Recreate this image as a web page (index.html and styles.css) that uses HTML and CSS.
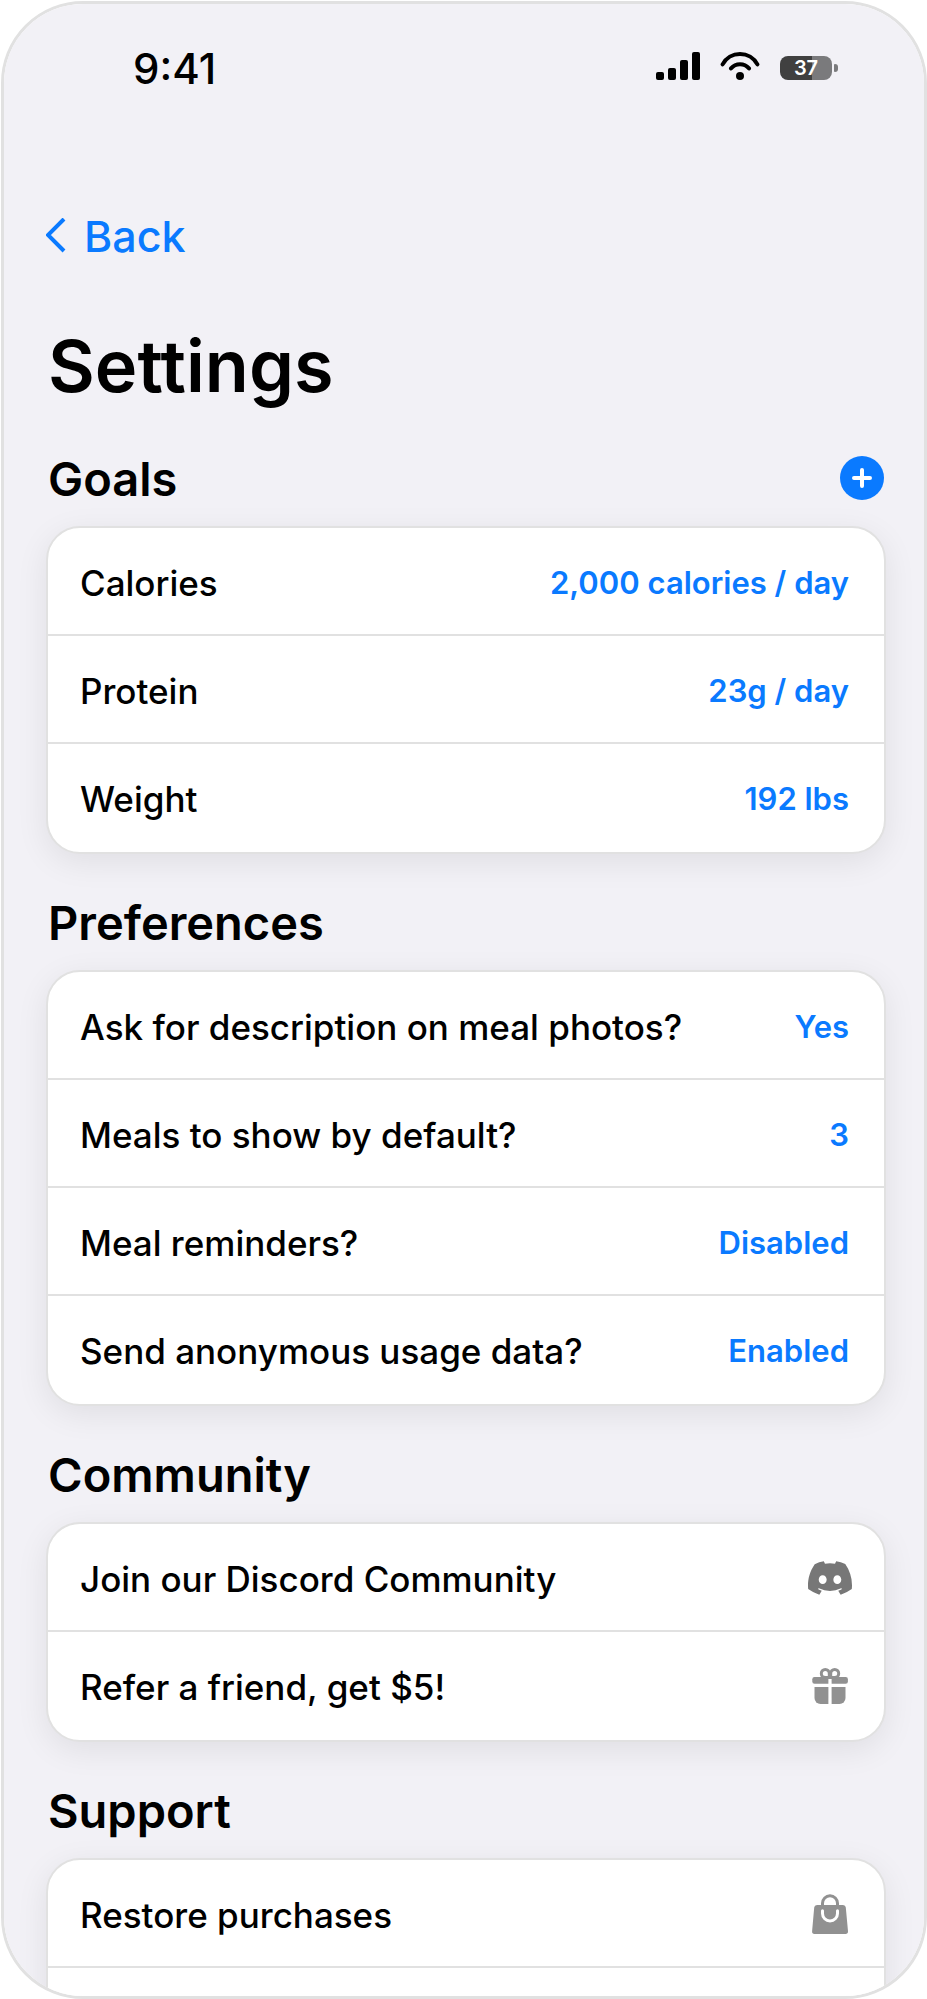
FILE: index.html
```html
<!DOCTYPE html>
<html lang="en">
<head>
  <meta charset="utf-8">
  <meta name="viewport" content="width=device-width, initial-scale=1">
  <title>Settings</title>
  <link rel="stylesheet" href="styles.css">
</head>
<body>
  <div class="phone">
    <header class="status-bar">
      <time class="clock">9:41</time>
      <div class="status-icons">
        <svg class="signal" viewBox="0 0 44 28" aria-hidden="true">
          <rect x="0" y="20" width="8" height="8" rx="2"/>
          <rect x="12" y="16" width="8" height="12" rx="2"/>
          <rect x="24" y="8" width="8" height="20" rx="2"/>
          <rect x="36" y="0" width="8" height="28" rx="2"/>
        </svg>
        <svg class="wifi" viewBox="0 0 40 28" aria-hidden="true">
          <path d="M2.6 12.4A19.8 19.8 0 0 1 37.4 12.4M11 16.4A12 12 0 0 1 29 16.4" fill="none" stroke="currentColor" stroke-width="4" stroke-linecap="round"/>
          <circle cx="20" cy="24" r="4"/>
        </svg>
        <div class="battery">
          <span class="battery-level">37</span>
          <span class="battery-tip"></span>
        </div>
      </div>
    </header>

    <main class="screen">
      <a class="back" href="#">
        <svg class="chevron" viewBox="0 0 20 36" aria-hidden="true">
          <path d="M18 1L2 17L18 33" fill="none" stroke="currentColor" stroke-width="4"/>
        </svg>
        Back
      </a>
      <h1 class="title">Settings</h1>

      <section class="section">
        <div class="section-head">
          <h2 class="section-title">Goals</h2>
          <button class="add" type="button" aria-label="Add goal">
            <svg class="plus" viewBox="0 0 20 20" aria-hidden="true">
              <path d="M10 2V18M2 10H18" fill="none" stroke="currentColor" stroke-width="4" stroke-linecap="round"/>
            </svg>
          </button>
        </div>
        <ul class="card">
          <li class="row"><span id="calories">Calories</span><button class="value" type="button" aria-describedby="calories">2,000 calories / day</button></li>
          <li class="row"><span id="protein">Protein</span><button class="value" type="button" aria-describedby="protein">23g / day</button></li>
          <li class="row"><span id="weight">Weight</span><button class="value" type="button" aria-describedby="weight">192 lbs</button></li>
        </ul>
      </section>

      <section class="section">
        <div class="section-head"><h2 class="section-title">Preferences</h2></div>
        <ul class="card">
          <li class="row"><span id="ask">Ask for description on meal photos?</span><button class="value" type="button" aria-describedby="ask">Yes</button></li>
          <li class="row"><span id="meals">Meals to show by default?</span><button class="value" type="button" aria-describedby="meals">3</button></li>
          <li class="row"><span id="reminders">Meal reminders?</span><button class="value" type="button" aria-describedby="reminders">Disabled</button></li>
          <li class="row"><span id="usage">Send anonymous usage data?</span><button class="value" type="button" aria-describedby="usage">Enabled</button></li>
        </ul>
      </section>

      <section class="section">
        <div class="section-head"><h2 class="section-title">Community</h2></div>
        <ul class="card">
          <li class="row">
            <a class="row-link" href="#">Join our Discord Community
              <svg class="icon icon-dark" viewBox="0 0 127.14 96.36" aria-hidden="true">
                <path fill="currentColor" d="M107.7,8.07A105.15,105.15,0,0,0,81.47,0a72.06,72.06,0,0,0-3.36,6.83A97.68,97.68,0,0,0,49,6.83,72.37,72.37,0,0,0,45.64,0,105.89,105.89,0,0,0,19.39,8.09C2.79,32.65-1.71,56.6.54,80.21h0A105.73,105.73,0,0,0,32.71,96.36,77.7,77.7,0,0,0,39.6,85.25a68.42,68.42,0,0,1-10.85-5.18c.91-.66,1.8-1.34,2.66-2a75.57,75.57,0,0,0,64.32,0c.87.71,1.76,1.39,2.66,2a68.68,68.68,0,0,1-10.87,5.19,77,77,0,0,0,6.89,11.1A105.25,105.25,0,0,0,126.6,80.22h0C129.24,52.84,122.09,29.11,107.7,8.07ZM42.45,65.69C36.18,65.69,31,60,31,53s5-12.74,11.43-12.74S54,46,53.89,53,48.84,65.69,42.45,65.69Zm42.24,0C78.41,65.69,73.25,60,73.25,53s5-12.74,11.44-12.74S96.23,46,96.12,53,91.08,65.69,84.69,65.69Z"/>
              </svg>
            </a>
          </li>
          <li class="row">
            <a class="row-link" href="#">Refer a friend, get $5!
              <svg class="icon" viewBox="0 0 44 40" aria-hidden="true">
                <g fill="currentColor">
                  <path d="M6.5 11H20.4V17.7H6.5A2.2 2.2 0 0 1 4.3 15.5V13.2A2.2 2.2 0 0 1 6.5 11Z"/>
                  <path d="M23.6 11H37.7A2.2 2.2 0 0 1 39.9 13.2V15.5A2.2 2.2 0 0 1 37.7 17.7H23.6Z"/>
                  <path d="M6.5 21H20.4V38H12.5A6 6 0 0 1 6.5 32Z"/>
                  <path d="M23.6 21H37.5V32A6 6 0 0 1 31.5 38H23.6Z"/>
                </g>
                <g fill="none" stroke="currentColor" stroke-width="3">
                  <path d="M21.3 11.500H17.3A4 4 0 1 1 21.3 7.500Z"/>
                  <path d="M22.7 11.500H26.7A4 4 0 1 0 22.7 7.500Z"/>
                </g>
              </svg>
            </a>
          </li>
        </ul>
      </section>

      <section class="section">
        <div class="section-head"><h2 class="section-title">Support</h2></div>
        <ul class="card">
          <li class="row">
            <a class="row-link" href="#">Restore purchases
              <svg class="icon" viewBox="0 0 44 40" aria-hidden="true">
                <path fill="currentColor" d="M9 11H35Q37.6 11 37.8 13.5L40 37.3Q40.1 40 37.5 40H6.5Q3.9 40 4.1 37.3L6.2 13.5Q6.4 11 9 11Z"/>
                <path d="M14.5 12V9.3A7.5 7.5 0 0 1 29.5 9.3V12" fill="none" stroke="currentColor" stroke-width="3"/>
                <path d="M14.5 16.7V19.5A7.5 7.5 0 0 0 29.5 19.5V16.7" fill="none" stroke="#fff" stroke-width="3" stroke-linecap="round"/>
              </svg>
            </a>
          </li>
          <li class="row"></li>
        </ul>
      </section>
    </main>
  </div>
</body>
</html>
```

FILE: styles.css
```css
:root {
  --blue: #0a7aff;
  --line: #e1e1e1;
  --page: #f2f1f6;
}

* {
  box-sizing: border-box;
}

body {
  margin: 0;
  padding: 1px 0 0 1px;
  background: #fff;
  color: #000;
  font-family: Inter, "Liberation Sans", sans-serif;
}

.phone {
  height: calc(100vh - 1px);
  overflow: auto;
  scrollbar-width: none;
  border: 3px solid var(--line);
  border-radius: 82px;
  background: var(--page);
}

.status-bar {
  display: flex;
  align-items: center;
  justify-content: space-between;
  padding: 41px 86px 0 129px;
}

.clock {
  font-size: 42px;
  font-weight: 500;
  line-height: 48px;
}

.status-icons {
  display: flex;
  align-items: flex-end;
  gap: 20px;
  padding-bottom: 6px;
}

.signal {
  width: 44px;
  height: 28px;
}

.wifi {
  width: 40px;
  height: 28px;
}

.battery {
  display: flex;
  align-items: center;
  gap: 2px;
}

.battery-level {
  width: 52px;
  border-radius: 8px;
  background: linear-gradient(to right, #404040 62%, #7a7a7c 62%);
  color: #fff;
  font-size: 20px;
  font-weight: 600;
  line-height: 24px;
  text-align: center;
}

.battery-tip {
  width: 4px;
  height: 8px;
  border-radius: 1px 3px 3px 1px;
  background: #7a7a7c;
}

.screen {
  padding: 116px 38px 40px 42px;
}

.back {
  display: flex;
  align-items: center;
  gap: 18px;
  width: fit-content;
  color: var(--blue);
  font-size: 43px;
  font-weight: 500;
  line-height: 54px;
  text-decoration: none;
}

.chevron {
  width: 20px;
  height: 36px;
}

.title {
  margin: 59px 0 0;
  padding: 0 2px;
  font-size: 72px;
  font-weight: 600;
  line-height: 88px;
}

.section {
  margin-top: 40px;
}

.section-head {
  display: flex;
  align-items: center;
  justify-content: space-between;
  margin-bottom: 18px;
  padding: 0 2px;
}

.section-title {
  margin: 0;
  font-size: 47px;
  font-weight: 600;
  line-height: 58px;
}

.add {
  display: flex;
  align-items: center;
  justify-content: center;
  width: 44px;
  height: 44px;
  margin: 0 0 2px;
  padding: 0;
  border: 0;
  border-radius: 50%;
  background: var(--blue);
  color: #fff;
}

.plus {
  width: 20px;
  height: 20px;
}

.card {
  margin: 0;
  padding: 0;
  border: 2px solid var(--line);
  border-radius: 34px;
  background: #fff;
  box-shadow: 0 8px 32px rgba(0, 0, 0, 0.08);
  list-style: none;
}

.row {
  display: flex;
  align-items: center;
  justify-content: space-between;
  height: 108px;
  padding: 4px 32px 0;
  font-size: 35px;
  font-weight: 500;
  line-height: 44px;
}

.row:not(:last-child) {
  border-bottom: 2px solid var(--line);
}

.row:last-child {
  padding-bottom: 2px;
}

.value {
  padding: 0 3px;
  border: 0;
  background: none;
  color: var(--blue);
  font: inherit;
  font-size: 31px;
  font-weight: 600;
}

.row-link {
  display: flex;
  flex: 1;
  align-items: center;
  justify-content: space-between;
  color: inherit;
  text-decoration: none;
}

.icon {
  width: 44px;
  height: 40px;
  margin-bottom: 2px;
  color: #919191;
}

.icon-dark {
  color: #777;
}
```
